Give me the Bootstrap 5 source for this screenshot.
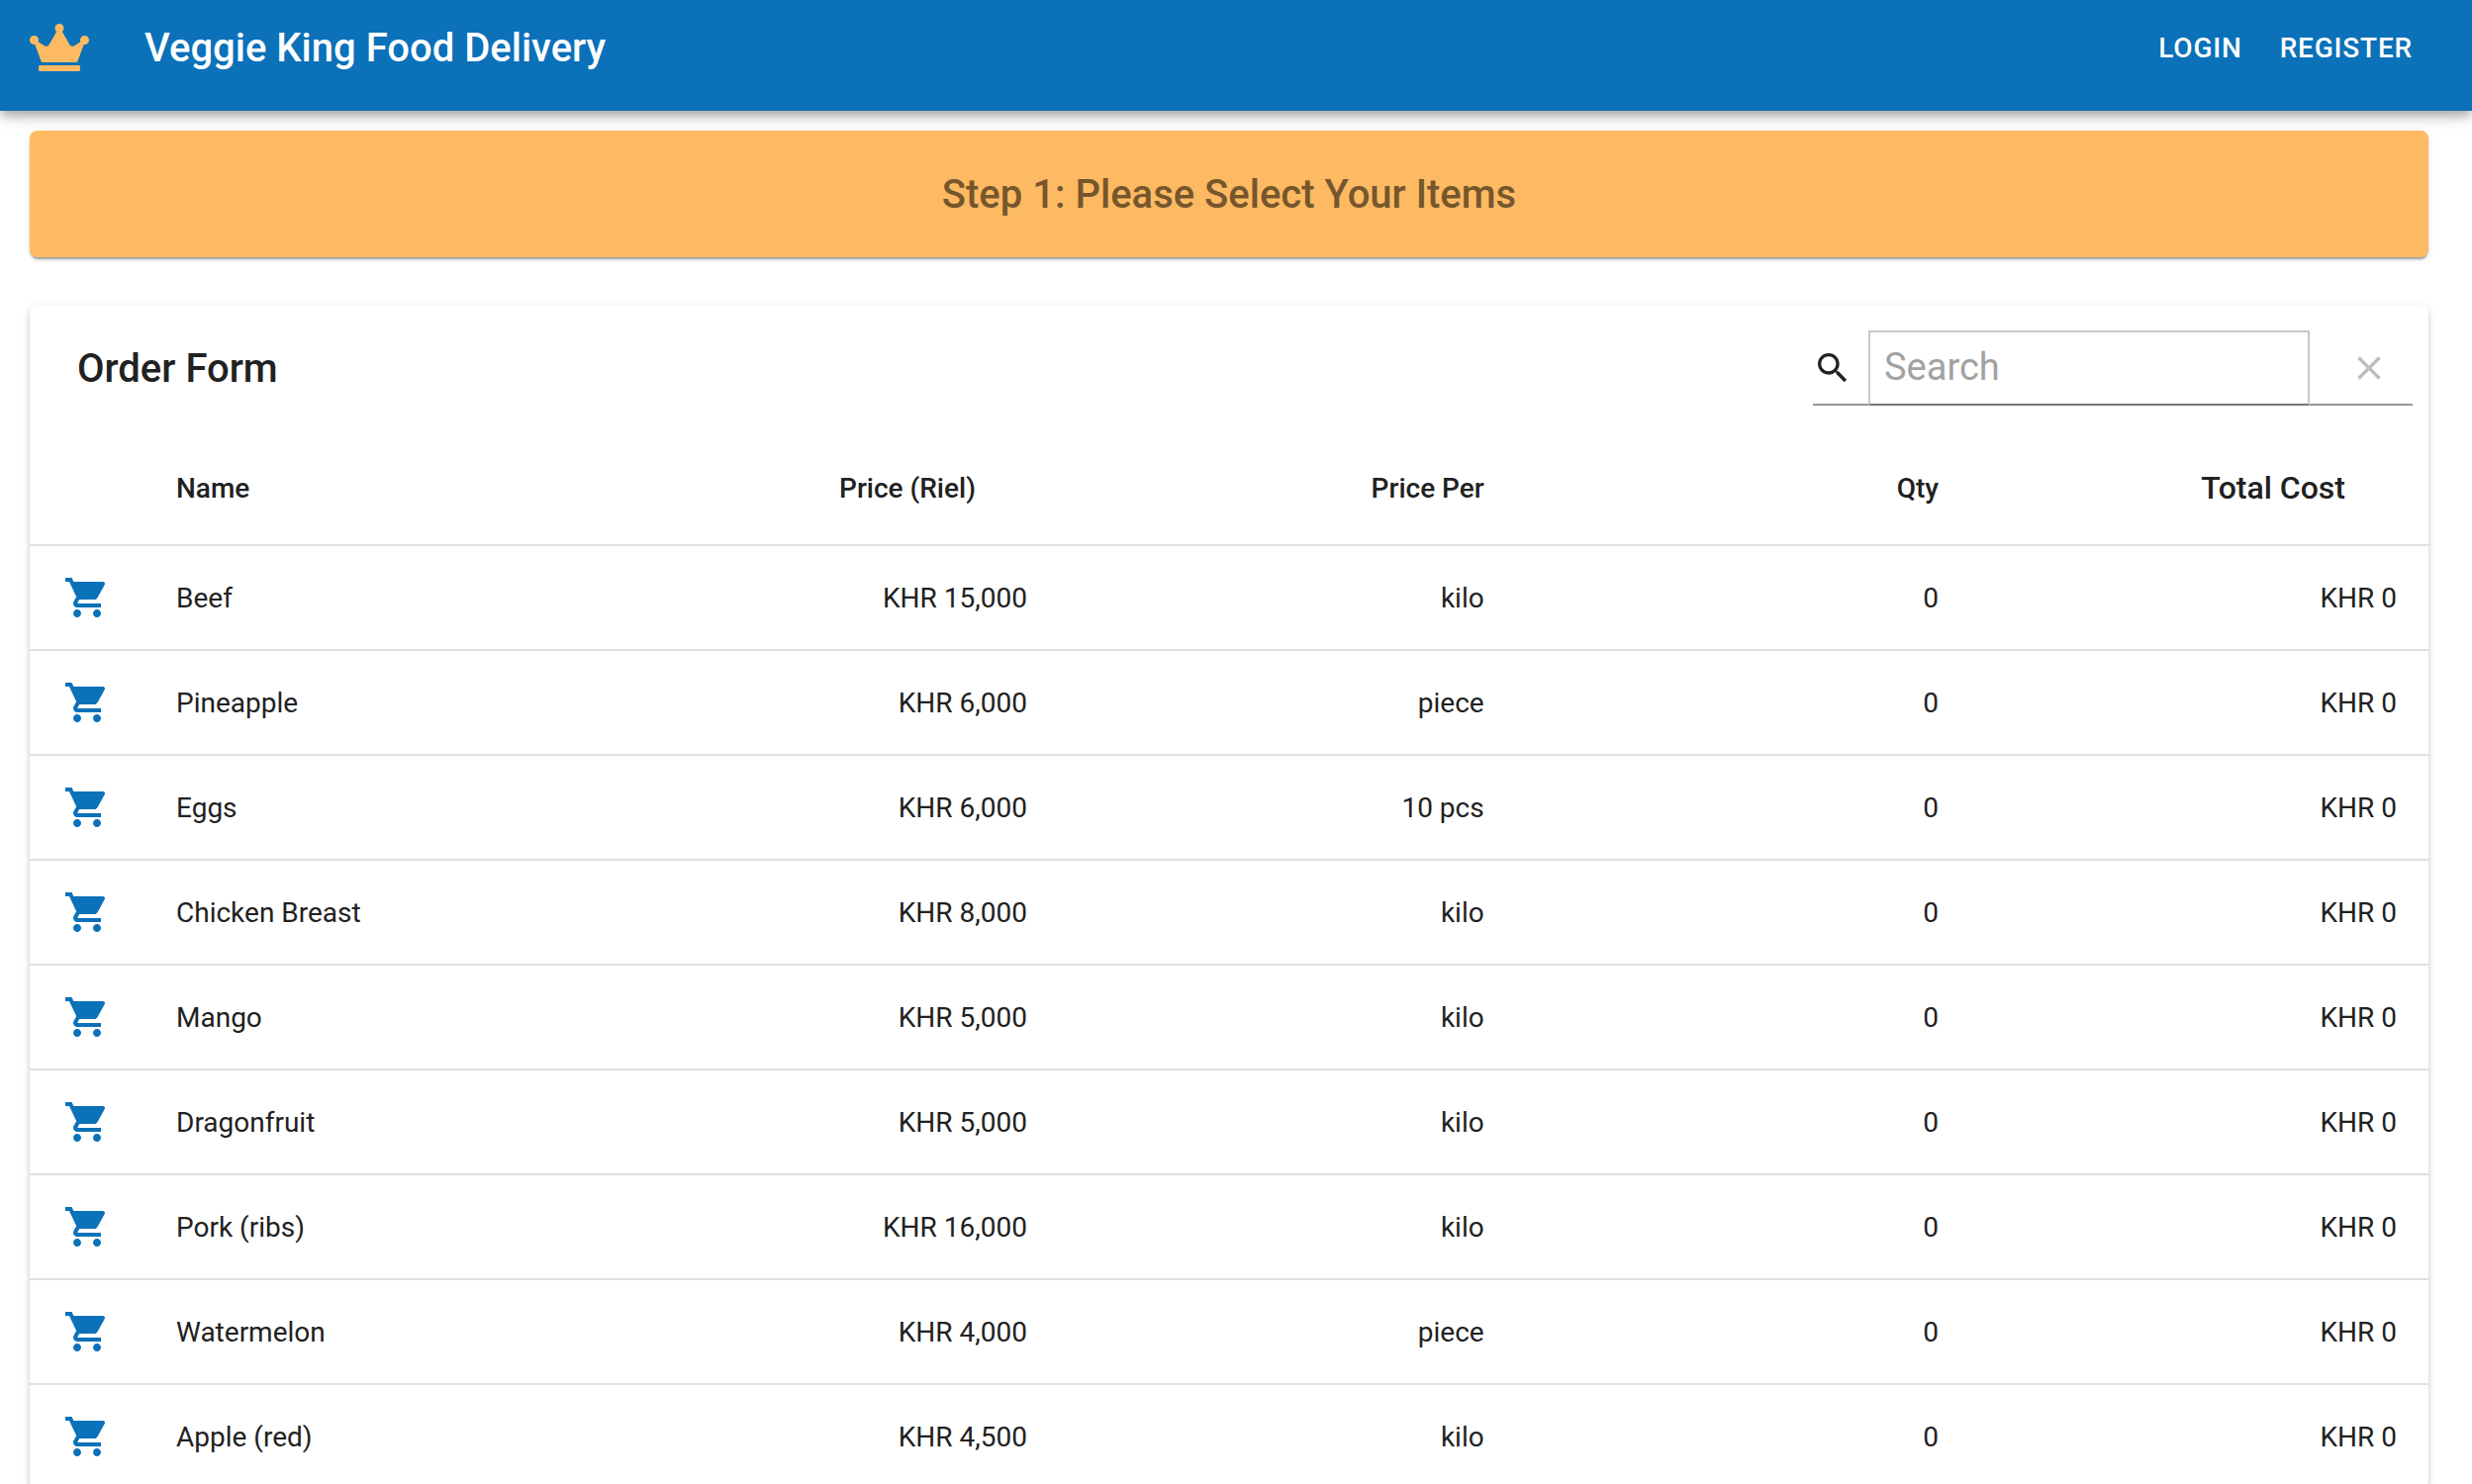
<!DOCTYPE html>
<html lang="en">
<head>
<meta charset="utf-8">
<meta name="viewport" content="width=device-width, initial-scale=1">
<title>Veggie King Food Delivery</title>
<link href="https://cdn.jsdelivr.net/npm/bootstrap@5.3.0/dist/css/bootstrap.min.css" rel="stylesheet">
<style>
  :root { --vk-blue: #0b71b9; --vk-orange: #fdba62; --vk-ink: #212121; }
  body { font-family: Roboto, "Liberation Sans", sans-serif; font-size: 28px; line-height: 40px; color: var(--vk-ink); background: #fff; }
  .app-header { height: 112px; padding: 0 44px 16px 30px; background: var(--vk-blue);
    box-shadow: 0 4px 8px -2px rgba(0,0,0,.2), 0 8px 10px rgba(0,0,0,.14), 0 2px 20px rgba(0,0,0,.12); }
  .app-title, .panel-title, .step-title { padding-top: 2px; font-size: 40px; line-height: 64px; font-weight: 500; }
  .brand-link { gap: 56px; }
  .auth-link { padding: 14px 16px 12px; font-weight: 500; line-height: 48px; letter-spacing: .02857em; }
  .auth-nav { gap: 6px; }
  .page-main { padding: 20px 44px 0 30px; }
  .step-banner { height: 128px; border-radius: 8px; background: var(--vk-orange); color: #76562d;
    box-shadow: 0 4px 2px -2px rgba(0,0,0,.2), 0 2px 2px rgba(0,0,0,.14), 0 2px 6px rgba(0,0,0,.12); }
  .order-panel { margin-top: 48px; border-radius: 8px; background: #fff;
    box-shadow: 0 6px 2px -4px rgba(0,0,0,.2), 0 4px 4px rgba(0,0,0,.14), 0 2px 10px rgba(0,0,0,.12); }
  .panel-bar { height: 128px; padding: 0 16px 0 48px; }
  .search-box { width: 606px; height: 76px; border-bottom: 2px solid #949494; }
  .search-label { padding-top: 2px; }
  .search-field { height: 76px; min-width: 0; margin: 0 16px -2px; padding: 0 14px 2px; border: 2px solid #c8c8c8; border-bottom-color: #757575; border-radius: 0; font-size: 38px; color: var(--vk-ink); outline: 0; }
  .search-field::placeholder { color: #a2a2a2; opacity: 1; }
  .clear-btn { padding: 2px 24px 0; color: #bdbdbd; }
  .order-table { table-layout: fixed; border-collapse: separate; border-spacing: 0; --bs-table-bg: transparent; --bs-table-color: var(--vk-ink); color: var(--vk-ink); }
  .order-table > :not(caption) > * > * { padding: 2px 32px 0; border-bottom: 2px solid #e0e0e0; vertical-align: middle; }
  .order-table tr { height: 106px; }
  .order-table thead tr { height: 116px; }
  .order-table th { font-weight: 500; }
  .order-table > thead > tr > .sortable { padding-right: 84px; }
  .order-table > thead > tr > .total-head { font-size: 32px; padding: 0 84px 0 32px; }
  .order-table > :not(caption) > * > .cart-cell { padding: 0; text-align: center; }
  .cart-btn { color: var(--vk-blue); line-height: 0; }
  .col-cart { width: 116px; } .col-price { width: 18.2%; } .col-per { width: 19.05%; } .col-qty { width: 18.95%; } .col-total { width: 19.1%; }
</style>
<script src="https://cdn.jsdelivr.net/npm/bootstrap@5.3.0/dist/js/bootstrap.bundle.min.js"></script>
</head>
<body>
<svg class="d-none" aria-hidden="true">
  <symbol id="cart" viewBox="0 0 24 24"><path fill="currentColor" d="M7 18c-1.100 0-1.990.9-1.990 2S5.900 22 7 22s2-.9 2-2-.9-2-2-2zM1 2v2h2l3.600 7.590-1.350 2.450c-.16.28-.25.61-.25.96 0 1.100.9 2 2 2h12v-2H7.420c-.14 0-.25-.11-.25-.25l.03-.12.9-1.630h7.450c.75 0 1.410-.41 1.750-1.030l3.580-6.490c.08-.14.12-.31.12-.48 0-.55-.45-1-1-1H5.210l-.94-2H1zm16 16c-1.100 0-1.990.9-1.990 2s.89 2 1.990 2 2-.9 2-2-.9-2-2-2z"/></symbol>
</svg>
<header class="app-header d-flex align-items-center justify-content-between">
  <a href="#" class="brand-link d-flex align-items-center text-white text-decoration-none">
    <svg width="60" height="48" viewBox="0 0 640 512" aria-hidden="true"><path fill="#fdba62" d="M528 448H112c-8.800 0-16 7.200-16 16v32c0 8.800 7.200 16 16 16h416c8.800 0 16-7.200 16-16v-32c0-8.800-7.200-16-16-16zm64-320c-26.500 0-48 21.500-48 48 0 7.100 1.600 13.700 4.400 19.800L476 239.200c-15.400 9.200-35.300 4-44.200-11.600L350.300 85C361 76.200 368 63 368 48c0-26.500-21.500-48-48-48s-48 21.500-48 48c0 15 7 28.200 17.700 37l-81.500 142.600c-8.900 15.600-28.900 20.800-44.200 11.600l-72.300-43.400c2.700-6 4.400-12.700 4.400-19.800 0-26.500-21.500-48-48-48S0 149.500 0 176s21.500 48 48 48c2.600 0 5.200-.4 7.700-.8L128 416h384l72.300-192.800c2.500.4 5.100.8 7.700.8 26.500 0 48-21.500 48-48s-21.500-48-48-48z"/></svg>
    <span class="app-title">Veggie King Food Delivery</span>
  </a>
  <nav class="auth-nav d-flex" aria-label="Account">
    <a href="#" class="auth-link text-white text-decoration-none">LOGIN</a>
    <a href="#" class="auth-link text-white text-decoration-none">REGISTER</a>
  </nav>
</header>
<main class="page-main">
  <div class="step-banner d-flex align-items-center justify-content-center">
    <h1 class="step-title m-0">Step 1: Please Select Your Items</h1>
  </div>
  <section class="order-panel">
    <div class="panel-bar d-flex align-items-center justify-content-between">
      <h2 class="panel-title m-0">Order Form</h2>
      <div class="search-box d-flex align-items-center">
        <label for="search" class="search-label d-flex">
          <svg width="40" height="40" viewBox="0 0 24 24" role="img" aria-label="Search"><path fill="currentColor" d="M15.500 14h-.79l-.28-.27C15.410 12.590 16 11.110 16 9.500 16 5.910 13.090 3 9.500 3S3 5.910 3 9.500 5.910 16 9.500 16c1.610 0 3.090-.59 4.230-1.570l.27.28v.79l5 4.990L20.490 19l-4.990-5zm-6 0C7.010 14 5 11.990 5 9.500S7.010 5 9.500 5 14 7.010 14 9.500 11.990 14 9.500 14z"/></svg>
        </label>
        <input id="search" type="text" class="search-field flex-grow-1 bg-transparent position-relative" placeholder="Search">
        <button type="button" class="clear-btn d-flex border-0 bg-transparent" aria-label="Clear search" disabled>
          <svg width="40" height="40" viewBox="0 0 24 24" aria-hidden="true"><path fill="currentColor" d="M19 6.410L17.590 5 12 10.590 6.410 5 5 6.410 10.590 12 5 17.590 6.410 19 12 13.410 17.590 19 19 17.590 13.410 12z"/></svg>
        </button>
      </div>
    </div>
    <table class="order-table table mb-0">
      <colgroup><col class="col-cart"><col><col class="col-price"><col class="col-per"><col class="col-qty"><col class="col-total"></colgroup>
      <thead>
        <tr><td></td><th scope="col">Name</th><th scope="col" class="sortable text-end">Price (Riel)</th><th scope="col" class="text-end">Price Per</th><th scope="col" class="text-end">Qty</th><th scope="col" class="total-head text-end">Total Cost</th></tr>
      </thead>
      <tbody>
        <tr><td class="cart-cell"><button type="button" class="cart-btn btn border-0 p-0" aria-label="Add Beef"><svg width="48" height="48"><use href="#cart"/></svg></button></td><td>Beef</td><td class="text-end">KHR 15,000</td><td class="text-end">kilo</td><td class="text-end">0</td><td class="text-end">KHR 0</td></tr>
        <tr><td class="cart-cell"><button type="button" class="cart-btn btn border-0 p-0" aria-label="Add Pineapple"><svg width="48" height="48"><use href="#cart"/></svg></button></td><td>Pineapple</td><td class="text-end">KHR 6,000</td><td class="text-end">piece</td><td class="text-end">0</td><td class="text-end">KHR 0</td></tr>
        <tr><td class="cart-cell"><button type="button" class="cart-btn btn border-0 p-0" aria-label="Add Eggs"><svg width="48" height="48"><use href="#cart"/></svg></button></td><td>Eggs</td><td class="text-end">KHR 6,000</td><td class="text-end">10 pcs</td><td class="text-end">0</td><td class="text-end">KHR 0</td></tr>
        <tr><td class="cart-cell"><button type="button" class="cart-btn btn border-0 p-0" aria-label="Add Chicken Breast"><svg width="48" height="48"><use href="#cart"/></svg></button></td><td>Chicken Breast</td><td class="text-end">KHR 8,000</td><td class="text-end">kilo</td><td class="text-end">0</td><td class="text-end">KHR 0</td></tr>
        <tr><td class="cart-cell"><button type="button" class="cart-btn btn border-0 p-0" aria-label="Add Mango"><svg width="48" height="48"><use href="#cart"/></svg></button></td><td>Mango</td><td class="text-end">KHR 5,000</td><td class="text-end">kilo</td><td class="text-end">0</td><td class="text-end">KHR 0</td></tr>
        <tr><td class="cart-cell"><button type="button" class="cart-btn btn border-0 p-0" aria-label="Add Dragonfruit"><svg width="48" height="48"><use href="#cart"/></svg></button></td><td>Dragonfruit</td><td class="text-end">KHR 5,000</td><td class="text-end">kilo</td><td class="text-end">0</td><td class="text-end">KHR 0</td></tr>
        <tr><td class="cart-cell"><button type="button" class="cart-btn btn border-0 p-0" aria-label="Add Pork (ribs)"><svg width="48" height="48"><use href="#cart"/></svg></button></td><td>Pork (ribs)</td><td class="text-end">KHR 16,000</td><td class="text-end">kilo</td><td class="text-end">0</td><td class="text-end">KHR 0</td></tr>
        <tr><td class="cart-cell"><button type="button" class="cart-btn btn border-0 p-0" aria-label="Add Watermelon"><svg width="48" height="48"><use href="#cart"/></svg></button></td><td>Watermelon</td><td class="text-end">KHR 4,000</td><td class="text-end">piece</td><td class="text-end">0</td><td class="text-end">KHR 0</td></tr>
        <tr><td class="cart-cell"><button type="button" class="cart-btn btn border-0 p-0" aria-label="Add Apple (red)"><svg width="48" height="48"><use href="#cart"/></svg></button></td><td>Apple (red)</td><td class="text-end">KHR 4,500</td><td class="text-end">kilo</td><td class="text-end">0</td><td class="text-end">KHR 0</td></tr>
      </tbody>
    </table>
  </section>
</main>
</body>
</html>
